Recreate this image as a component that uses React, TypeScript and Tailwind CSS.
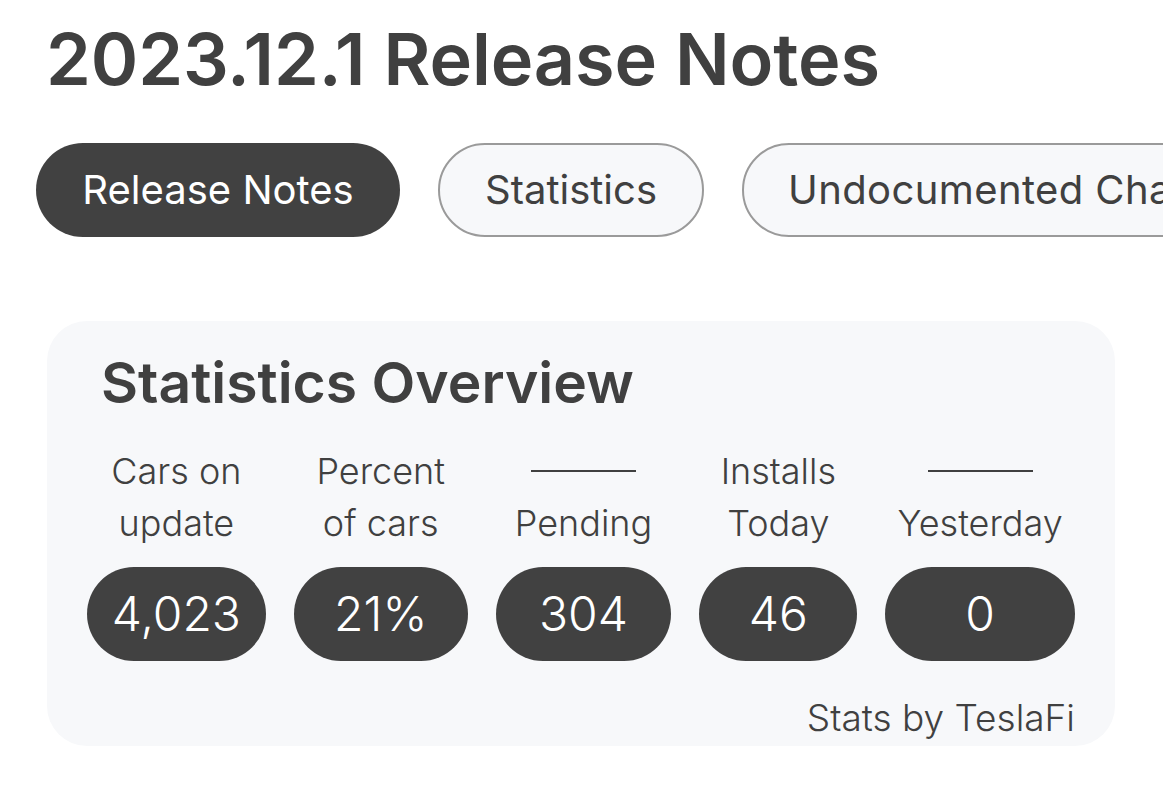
import React from "react";

const stats = [
  { top: "Cars on", bottom: "update", value: "4,023", w: "w-[179px]" },
  { top: "Percent", bottom: "of cars", value: "21%", w: "w-[174px]" },
  { top: null, bottom: "Pending", value: "304", w: "w-[176px]" },
  { top: "Installs", bottom: "Today", value: "46", w: "w-[158px]" },
  { top: null, bottom: "Yesterday", value: "0", w: "w-[190px]" },
];

export default function App() {
  return (
    <div className="min-h-screen w-full overflow-hidden bg-white text-[#404040] font-['Inter',sans-serif]">
      <h1 className="pl-[46px] pt-[15px] text-[72px] font-semibold leading-[88px] tracking-[-0.1px] whitespace-nowrap">
        2023.12.1 Release Notes
      </h1>

      <div className="mt-[40px] flex gap-[38px] pl-[36px] whitespace-nowrap">
        <button className="h-[94px] w-[364px] shrink-0 rounded-full bg-[#414141] text-[40px] text-white">
          Release Notes
        </button>
        <button className="h-[94px] w-[266px] shrink-0 rounded-full border-2 border-[#9a9a9a] bg-[#f7f8fa] text-[40px]">
          Statistics
        </button>
        <button className="h-[94px] shrink-0 rounded-full border-2 border-[#9a9a9a] bg-[#f7f8fa] pl-[44px] pr-[44px] text-left text-[40px] tracking-[0.4px]">
          Undocumented Changes
        </button>
      </div>

      <div className="ml-[47px] mt-[84px] w-[1068px] rounded-[40px] bg-[#f7f8fa] pb-[6px] pl-[40px] pr-[40px] pt-[26px]">
        <h2 className="pl-[14px] text-[57px] font-semibold leading-[72px]">Statistics Overview</h2>

        <div className="mt-[26px] flex gap-[28px]">
          {stats.map((s) => (
            <div key={s.value} className={`${s.w} flex flex-col items-center`}>
              <div className="flex h-[52px] items-center whitespace-nowrap text-[36px] font-light">
                {s.top ? s.top : <span className="block h-[2px] w-[105px] bg-[#404040]" />}
              </div>
              <div className="flex h-[52px] items-center whitespace-nowrap text-[36px] font-light">{s.bottom}</div>
              <div className="mt-[18px] flex h-[94px] w-full items-center justify-center rounded-full bg-[#414141] text-[48px] font-light text-white">
                {s.value}
              </div>
            </div>
          ))}
        </div>

        <div className="mt-[35px] text-right text-[37px] font-light leading-[44px]">Stats by TeslaFi</div>
      </div>
    </div>
  );
}
